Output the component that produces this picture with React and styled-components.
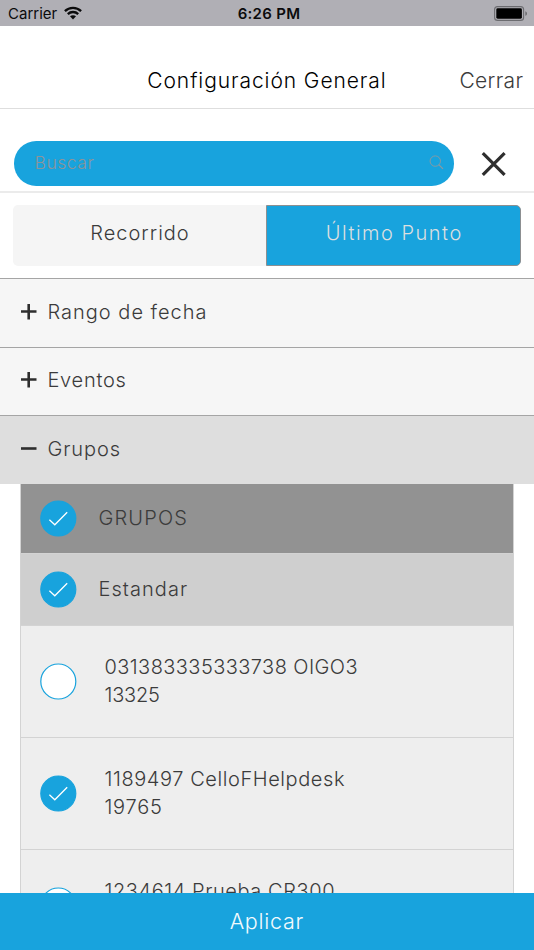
import React from "react";
import styled, { createGlobalStyle } from "styled-components";

const BLUE = "#18a3dd";
const INK = "#3b3b3b";

const GlobalStyle = createGlobalStyle`
  *, *::before, *::after { box-sizing: border-box; }
  body { margin: 0; background: #fff; }
`;

const Screen = styled.div`
  display: flex;
  flex-direction: column;
  width: 534px;
  height: 950px;
  overflow: hidden;
  background: #fff;
  color: ${INK};
  font: 300 20px/28px Inter, sans-serif;
`;

const Label = styled.span`
  white-space: nowrap;
  letter-spacing: ${(p) => p.$track || 0}px;
  margin-right: ${(p) => -(p.$track || 0)}px;
`;

const StatusBar = styled.div`
  flex: none;
  display: grid;
  grid-template-columns: 1fr auto 1fr;
  align-items: center;
  height: 26px;
  padding: 1px 6px 0 8px;
  background: #b0afb5;
  color: #0b0b0c;
  font-size: 15px;
  font-weight: 400;
  line-height: 18px;
`;

const Carrier = styled.div`
  display: flex;
  align-items: center;
  gap: 7px;
  svg { margin-top: -1px; }
`;

const Clock = styled.div`
  font-weight: 600;
  letter-spacing: 0.3px;
  padding-left: 2px;
`;

const Battery = styled.div`
  display: flex;
  justify-content: flex-end;
  svg { margin-top: -1px; }
`;

const Header = styled.header`
  flex: none;
  display: grid;
  grid-template-columns: 1fr auto 1fr;
  align-items: center;
  height: 83px;
  padding: 27px 11px 0 10px;
  border-bottom: 1px solid #dedede;
  font-size: 21px;
`;

const Title = styled.h1`
  grid-column: 2;
  margin: 0;
  color: #000;
  font: inherit;
`;

const Close = styled.button`
  justify-self: end;
  padding: 0;
  border: 0;
  background: none;
  color: ${INK};
  font: inherit;
`;

const SearchRow = styled.div`
  flex: none;
  display: flex;
  align-items: flex-start;
  gap: 27px;
  height: 84px;
  padding: 32px 27px 0 14px;
  border-bottom: 2px solid #ebebeb;
  > svg { margin-top: 9px; }
`;

const SearchField = styled.div`
  display: flex;
  align-items: center;
  justify-content: space-between;
  width: 440px;
  height: 44.5px;
  padding: 0 10px 1px 20.5px;
  border-radius: 22.25px;
  background: ${BLUE};
  color: #8c9499;
  font-size: 17.5px;
`;

const Tabs = styled.div`
  flex: none;
  display: flex;
  height: 61px;
  margin: 12px 13px;
`;

const Tab = styled.button`
  flex: 1;
  padding: 0 0 5px;
  border: ${(p) => (p.$active ? "1px solid #8c8f91" : "0")};
  border-radius: ${(p) => (p.$active ? "0 5px 5px 0" : "5px 0 0 5px")};
  background: ${(p) => (p.$active ? BLUE : "#f5f5f5")};
  color: ${(p) => (p.$active ? "#dcdfe0" : INK)};
  font: inherit;
`;

const Section = styled.div`
  flex: none;
  display: flex;
  align-items: center;
  gap: 10.5px;
  height: ${(p) => (p.$open ? 69 : 68.5)}px;
  padding: 0 20px 2px;
  border-top: 1px solid #a5a5a5;
  background: ${(p) => (p.$open ? "#dedede" : "#f6f6f6")};
`;

const List = styled.div`
  flex: 1;
  min-height: 0;
  overflow: hidden;
  margin: 0 20px;
  border: 1px solid #d3d3d3;
  border-width: 0 1px;
`;

const levels = {
  root: { height: 70, bg: "#929292", pad: 21.5 },
  group: { height: 72, bg: "#cfcfcf", pad: 21.5 },
  device: { height: 112, bg: "#eeeeee", pad: 27.5 },
};

const Item = styled.div`
  display: flex;
  align-items: center;
  gap: ${(p) => levels[p.$level].pad}px;
  height: ${(p) => levels[p.$level].height}px;
  padding-left: 19px;
  background: ${(p) => levels[p.$level].bg};
  border-bottom: 1px solid #d3d3d3;
`;

const ItemText = styled.div`
  display: flex;
  flex-direction: column;
  line-height: 28.4px;
  margin-top: -1px;
`;

const Footer = styled.button`
  flex: none;
  height: 57px;
  padding: 0 1px 1px 0;
  border: 0;
  background: ${BLUE};
  color: #f2fafd;
  font: inherit;
  font-size: 21.5px;
`;

const WifiIcon = () => (
  <svg width="18" height="14" viewBox="0 0 18 14" fill="none" stroke="#0b0b0c" strokeWidth="2.3">
    <path d="M0.9 5.1C5.4 0.7 12.6 0.7 17.1 5.1" />
    <path d="M3.8 8.1C6.7 5.3 11.3 5.3 14.2 8.1" />
    <path d="M9 13.4L6 10.3C7.7 8.8 10.3 8.8 12 10.3Z" fill="#0b0b0c" stroke="none" />
  </svg>
);

const BatteryIcon = () => (
  <svg width="34" height="15" viewBox="0 0 34 15">
    <rect x="0.6" y="0.6" width="29" height="13.8" rx="3" fill="none" stroke="#6c6c70" strokeWidth="1.1" />
    <rect x="2.3" y="2.3" width="25.6" height="10.4" rx="1.4" fill="#000" />
    <path d="M31.3 5.2C33.6 6 33.6 9 31.3 9.8Z" fill="#6c6c70" />
  </svg>
);

const SearchIcon = () => (
  <svg width="15" height="15" viewBox="0 0 15 15" fill="none" stroke="#8f999e">
    <circle cx="6.3" cy="6.1" r="5.2" strokeWidth="0.9" />
    <path d="M9.8 9.6L14 13.8" strokeWidth="1.2" />
  </svg>
);

const CrossIcon = () => (
  <svg width="26" height="26" viewBox="0 0 26 26" stroke="#2e2e2e" strokeWidth="3.2">
    <path d="M1.8 3.1L23.6 24.9M23.6 3.1L1.8 24.9" />
  </svg>
);

const ToggleIcon = ({ open }) => (
  <svg width="17" height="16" viewBox="0 0 17 16" stroke="#2e2e2e" strokeWidth="2.6">
    <path d={open ? "M1 7.5H16.5" : "M1 7.5H16.5M8.7 0V15.5"} />
  </svg>
);

const CheckIcon = ({ checked }) => (
  <svg width="37" height="37" viewBox="0 0 37 37" fill="none">
    <circle cx="18.3" cy="18.5" r="17.5" fill={checked ? BLUE : "#fff"} stroke={BLUE} strokeWidth="1.2" />
    {checked && <path d="M9.4 19.8L14.8 24.8L27.2 12.3" stroke="#fff" strokeWidth="1.3" />}
  </svg>
);

const sections = [
  { name: "Rango de fecha", track: 1.0, open: false },
  { name: "Eventos", track: 0.72, open: false },
  { name: "Grupos", track: 0.9, open: true },
];

const items = [
  { level: "root", checked: true, lines: [["GRUPOS", 1.15]] },
  { level: "group", checked: true, lines: [["Estandar", 1.06]] },
  { level: "device", checked: false, lines: [["031383335333738 OIGO3", 0.42], ["13325", -0.2]] },
  { level: "device", checked: true, lines: [["1189497 CelloFHelpdesk", 0.58], ["19765", 0.75]] },
  { level: "device", checked: false, lines: [["1234614 Prueba CR300", 0.58], ["", 0]] },
];

export default function App() {
  return (
    <>
      <GlobalStyle />
      <Screen>
        <StatusBar>
          <Carrier>
            Carrier
            <WifiIcon />
          </Carrier>
          <Clock>6:26 PM</Clock>
          <Battery>
            <BatteryIcon />
          </Battery>
        </StatusBar>
        <Header>
          <Title>
            <Label $track={0.92}>Configuración General</Label>
          </Title>
          <Close>
            <Label $track={0.34}>Cerrar</Label>
          </Close>
        </Header>
        <SearchRow>
          <SearchField>
            <Label $track={0.54}>Buscar</Label>
            <SearchIcon />
          </SearchField>
          <CrossIcon />
        </SearchRow>
        <Tabs>
          <Tab>
            <Label $track={1}>Recorrido</Label>
          </Tab>
          <Tab $active>
            <Label $track={1.5}>Último Punto</Label>
          </Tab>
        </Tabs>
        {sections.map((s) => (
          <Section key={s.name} $open={s.open}>
            <ToggleIcon open={s.open} />
            <Label $track={s.track}>{s.name}</Label>
          </Section>
        ))}
        <List>
          {items.map((item) => (
            <Item key={item.lines[0][0]} $level={item.level}>
              <CheckIcon checked={item.checked} />
              <ItemText>
                {item.lines.map(([text, track]) => (
                  <Label key={text} $track={track}>
                    {text || "\u00a0"}
                  </Label>
                ))}
              </ItemText>
            </Item>
          ))}
        </List>
        <Footer>
          <Label $track={0.75}>Aplicar</Label>
        </Footer>
      </Screen>
    </>
  );
}
